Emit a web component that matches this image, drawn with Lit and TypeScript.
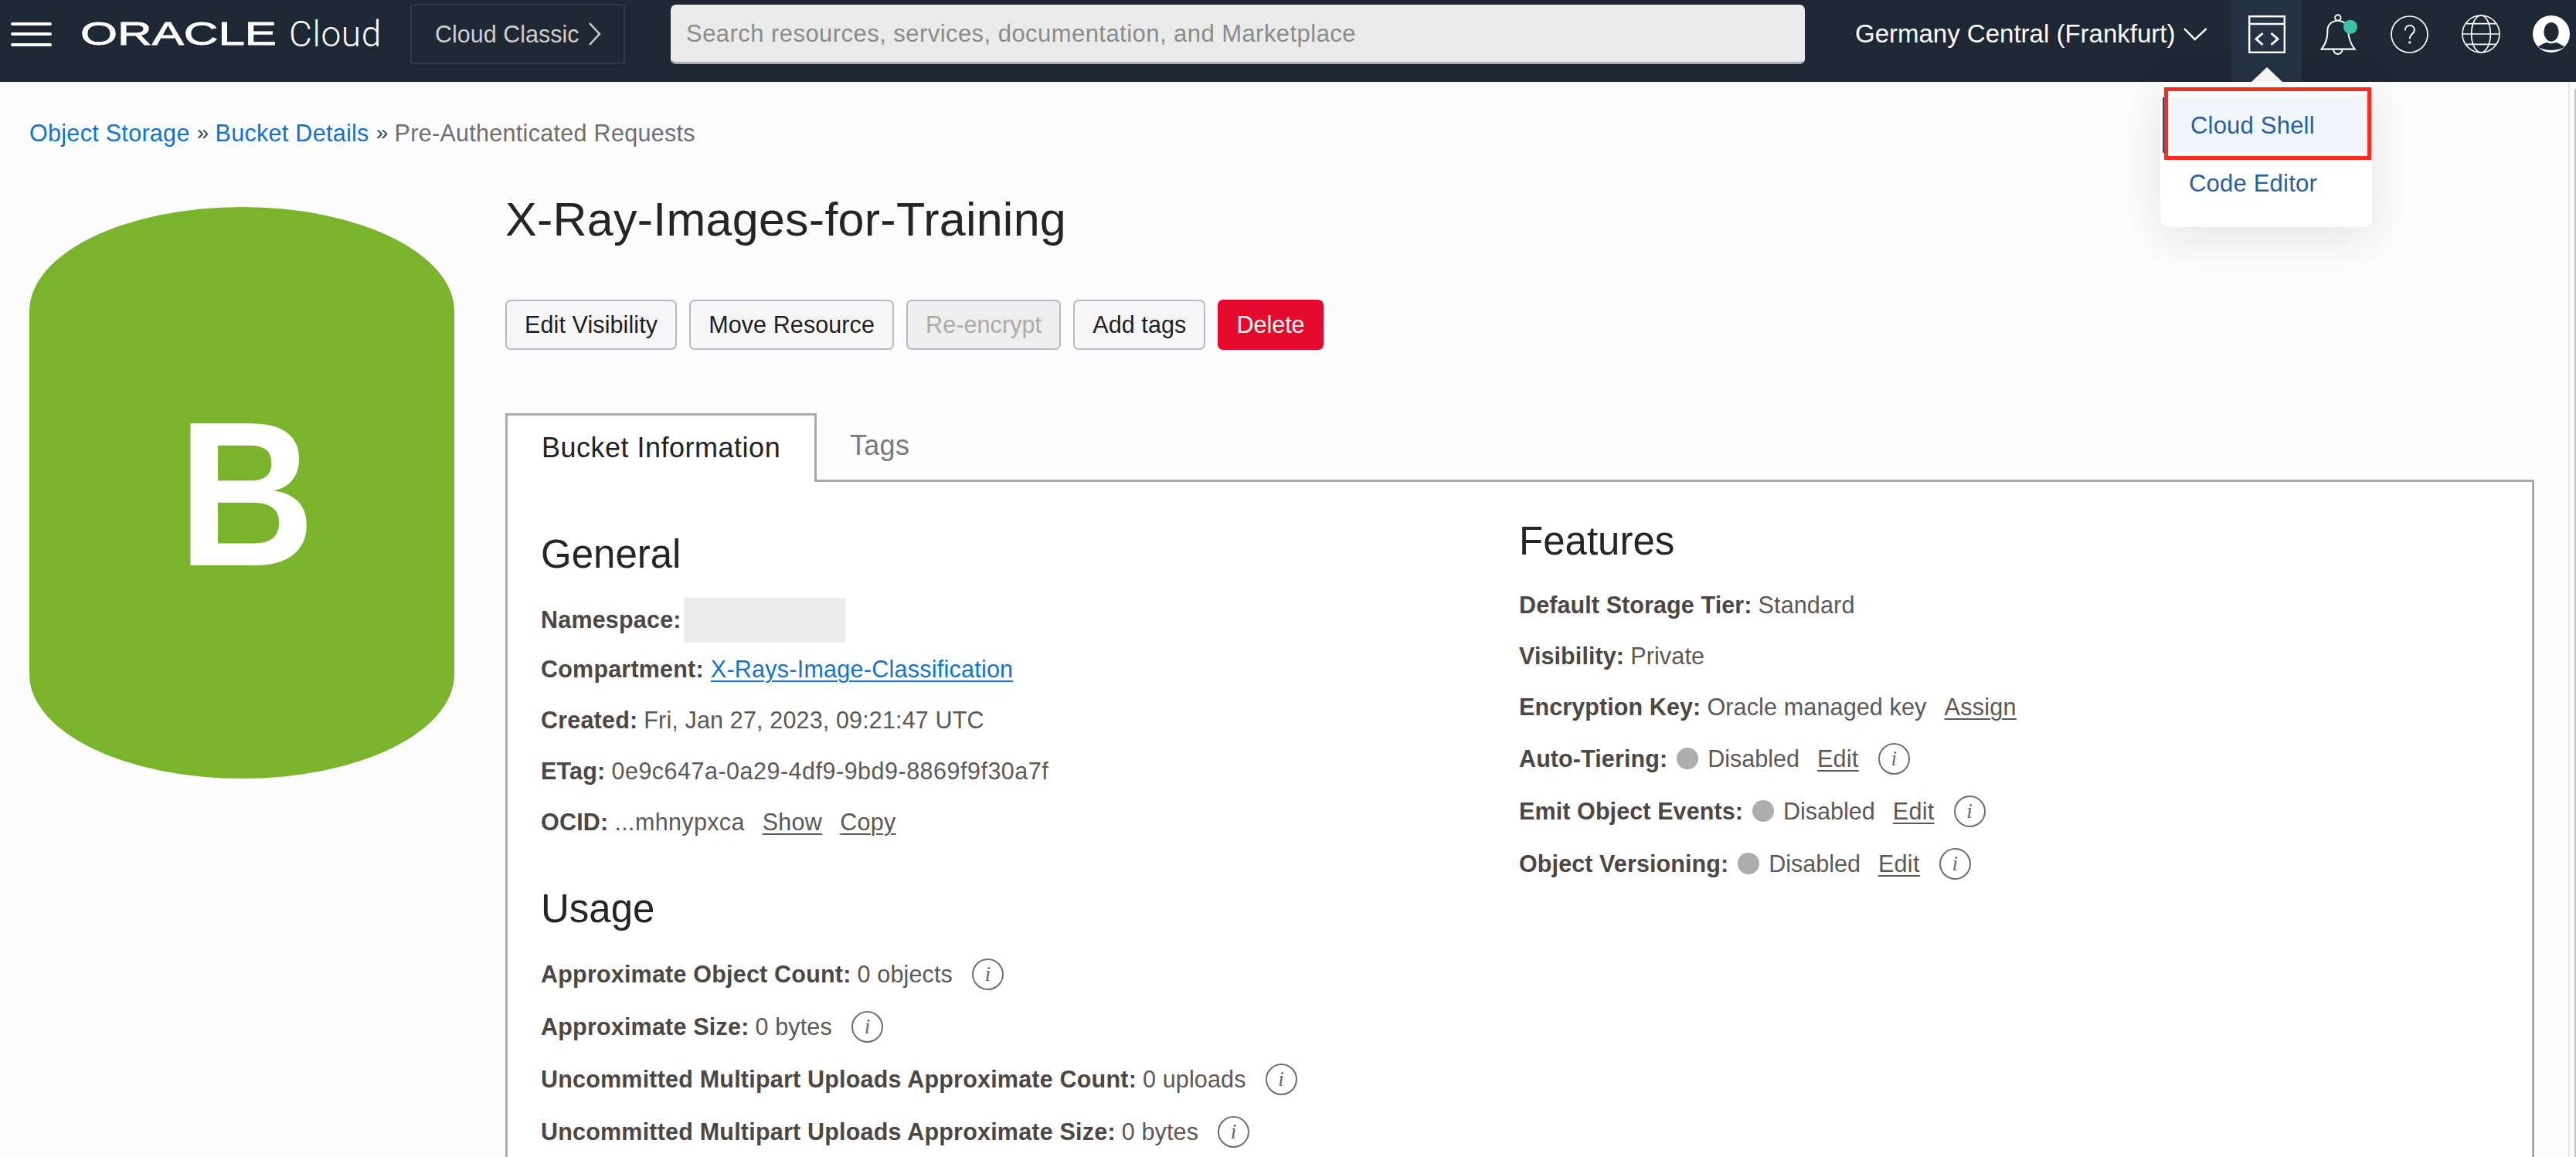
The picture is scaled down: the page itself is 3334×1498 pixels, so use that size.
import { LitElement, html, css, svg } from 'lit';
import { customElement } from 'lit/decorators.js';

const chevron = (points: string, w: number, h: number) => html`
  <svg width=${w} height=${h} viewBox="0 0 ${w} ${h}">
    <polyline points=${points} fill="none" stroke="currentColor" stroke-width="2.5"></polyline>
  </svg>
`;

const codeIcon = html`
  <svg width="48" height="49" viewBox="0 0 48 49" fill="none" stroke="#fff" stroke-width="2.4">
    <rect x="1.2" y="1.2" width="45.6" height="46.6"></rect>
    <line x1="1" y1="11" x2="47" y2="11"></line>
    <polyline points="18.5,23 10,30.5 18.5,38" stroke-width="3"></polyline>
    <polyline points="29.5,23 38,30.5 29.5,38" stroke-width="3"></polyline>
  </svg>
`;

const bellIcon = html`
  <svg width="49" height="53" viewBox="340 42 146 158" fill="none" stroke="#fff" stroke-width="6">
    <circle cx="408" cy="57" r="11"></circle>
    <path d="M391 180 a17 17 0 0 0 34 0"></path>
    <path d="M345 178 C368 148 368 122 368 105 C368 82 388 68 408 68 C428 68 448 82 448 105 C448 122 450 148 473 178 Z" fill="#1e2734"></path>
    <circle cx="456" cy="92" r="27" fill="#41c1a5" stroke="none"></circle>
  </svg>
`;

const helpIcon = html`
  <svg width="49" height="49" viewBox="612 46 146 146" fill="none" stroke="#fff" stroke-width="5">
    <circle cx="685" cy="119" r="70"></circle>
    <path d="M668 104 C668 92 676 85 686 85 C697 85 704 92 704 102 C704 113 696 116 691 122 C687 127 686 130 686 136" stroke-width="6"></path>
    <circle cx="686" cy="150" r="5" fill="#fff" stroke="none"></circle>
  </svg>
`;

const globeIcon = html`
  <svg width="50" height="50" viewBox="888 47 150 150" fill="none" stroke="#fff" stroke-width="5">
    <circle cx="963" cy="122" r="72"></circle>
    <ellipse cx="963" cy="122" rx="37" ry="72"></ellipse>
    <line x1="905" y1="82" x2="1021" y2="82"></line>
    <line x1="891" y1="122" x2="1035" y2="122"></line>
    <line x1="905" y1="162" x2="1021" y2="162"></line>
  </svg>
`;

const avatarIcon = html`
  <svg width="48" height="48" viewBox="1168 46 144 144">
    <circle cx="1240" cy="118" r="72" fill="#fff"></circle>
    <ellipse cx="1240" cy="110" rx="29" ry="37" fill="#1e2734"></ellipse>
    <path d="M1188 168 Q1204 156 1222 150 Q1240 160 1258 150 Q1276 156 1292 168 Q1240 194 1188 168 Z" fill="#1e2734"></path>
  </svg>
`;

const cylinder = svg`
  <path d="M0 135 A275 135 0 0 1 550 135 V605 A275 135 0 0 1 0 605 Z" fill="#7ab32c"></path>
  <text x="192" y="464" textLength="178" lengthAdjust="spacingAndGlyphs" font-family="Liberation Sans, Arial, sans-serif" font-weight="700" font-size="267" fill="#fff">B</text>
`;

@customElement('app-root')
export class AppRoot extends LitElement {
  static styles = css`
    :host {
      display: block;
      height: 1498px;
      overflow: hidden;
      background: #fcfcfc;
      font-family: "Liberation Sans", Arial, sans-serif;
      font-size: 30.5px;
      color: #5c5855;
    }
    * { box-sizing: border-box; }

    header {
      display: flex;
      align-items: center;
      height: 106px;
      padding-bottom: 18px;
      background: #1e2734;
      color: #fff;
    }
    .burger {
      display: flex;
      flex-direction: column;
      justify-content: space-between;
      width: 53px;
      height: 31px;
      margin-left: 14px;
    }
    .burger span { height: 4px; border-radius: 2px; background: #fff; }
    .logo { display: block; flex: none; margin-left: 37px; overflow: visible; }
    .logo text { font-family: "Liberation Sans", Arial, sans-serif; font-size: 43px; fill: #fff; stroke: #fff; stroke-width: .9px; }
    .cloud {
      width: 117px;
      margin-left: 16px;
      font-family: Roboto, sans-serif;
      font-weight: 300;
      font-size: 46px;
      letter-spacing: .6px;
    }
    .classic {
      display: flex;
      align-items: center;
      gap: 12px;
      width: 278px;
      height: 78px;
      margin-left: 40px;
      padding-left: 30px;
      border: 2px solid #303a46;
      border-radius: 4px;
      color: #cfcfcf;
    }
    .search {
      display: flex;
      align-items: center;
      width: 1468px;
      height: 77px;
      margin-left: 59px;
      padding-left: 18px;
      border: 2px solid #ebebeb;
      border-bottom: 3px solid #a9aeb8;
      border-radius: 7px;
      background: #ebebeb;
      color: #8b8b8b;
      font-size: 31px;
      letter-spacing: .45px;
    }
    .region {
      display: flex;
      align-items: center;
      gap: 11px;
      width: 457px;
      margin-left: 65px;
      font-size: 33px;
      white-space: nowrap;
    }
    .tool {
      position: relative;
      align-self: stretch;
      display: flex;
      align-items: center;
      justify-content: center;
      width: 91px;
      margin: 0 0 -18px 30px;
      padding-bottom: 18px;
      background: #253244;
    }
    .tri {
      position: absolute;
      left: 26px;
      top: 87px;
      width: 0;
      height: 0;
      border-left: 20px solid transparent;
      border-right: 20px solid transparent;
      border-bottom: 19px solid #fafafa;
    }
    .menu {
      position: absolute;
      z-index: 5;
      top: 106px;
      left: -92px;
      width: 274px;
      height: 188px;
      padding-top: 20px;
      border-radius: 0 0 10px 10px;
      background: #fff;
      box-shadow: 0 12px 60px rgba(0, 0, 0, .1);
      color: #2a5ea3;
      font-size: 31px;
      letter-spacing: .2px;
    }
    .item {
      display: flex;
      align-items: center;
      height: 72px;
      padding: 2px 0 0 37px;
      margin-bottom: 3px;
    }
    .item.on {
      margin-left: 3px;
      padding-left: 34px;
      border-left: 2px solid #1f4f8f;
      background: #f1f6fb;
    }
    .mark {
      position: absolute;
      left: 5px;
      top: 7px;
      width: 268px;
      height: 94px;
      border: 5px solid #ff2a1f;
    }
    .bell { margin-left: 24px; display: flex; }
    .help { margin-left: 42px; display: flex; }
    .globe { margin-left: 43px; display: flex; }
    .avatar { margin-left: 42px; display: flex; }

    .page { display: flex; height: 1392px; overflow: hidden; }
    .main { width: 3324px; flex: none; }
    .rail { flex: 1; padding: 9px 0 0 6px; border-left: 2px solid #e8e8e8; background: #fbfbfb; }
    .thumb { height: 100%; border-radius: 2px 0 0 0; background: #c2c2c2; }

    .crumbs {
      display: flex;
      align-items: center;
      height: 40px;
      margin-top: 46px;
      padding-left: 38px;
      color: #6f6f6f;
      letter-spacing: .3px;
    }
    .crumbs a { color: #1372cf; }
    .crumbs i { margin: 0 8px 0 9px; font-style: normal; color: #444; font-size: 28px; }

    .body { display: flex; margin-top: 57px; padding-left: 38px; gap: 66px; }
    .cyl { flex: none; margin-top: 19px; display: block; }
    .content { width: 2626px; flex: none; }
    h1 { margin: 0; height: 70px; font-size: 61px; line-height: 70px; font-weight: 400; color: #252525; letter-spacing: .25px; }

    .actions { display: flex; gap: 16px; margin-top: 69px; }
    .btn {
      display: flex;
      align-items: center;
      height: 65px;
      padding: 0 23px;
      border: 2px solid #b6bcc7;
      border-radius: 7px;
      background: #f6f6f6;
      color: #1f1f1f;
      letter-spacing: .1px;
    }
    .btn.off { background: #eeeeee; color: #aaa; }
    .btn.danger { padding: 0 22px; border-color: #e40b2f; background: #e40b2f; color: #fff; letter-spacing: 0; }

    .tabs { display: flex; height: 89px; margin-top: 82px; border-bottom: 3px solid #aaa; font-size: 36px; letter-spacing: .5px; }
    .tab { display: flex; align-items: center; padding-bottom: 2px; }
    .tab.on {
      width: 403px;
      height: 89px;
      padding-left: 44px;
      border: 3px solid #aaa;
      border-bottom: 0;
      background: #fff;
      color: #222;
    }
    .tab.plain { margin-left: 43px; color: #7a7a7a; letter-spacing: .3px; }

    .panel {
      display: grid;
      grid-template-columns: 1266px 1fr;
      height: 900px;
      padding: 47px 0 0 43px;
      border-left: 3px solid #aaa;
      border-right: 3px solid #aaa;
      background: #fff;
    }
    h2 { margin: 0; height: 60px; font-size: 51px; line-height: 60px; font-weight: 400; color: #252525; }
    .left { padding-top: 17px; }
    .rows { margin-top: 19px; }
    .rows.usage { margin-top: 20px; }
    h2.next { margin-top: 50px; }
    .row { display: flex; align-items: center; height: 66px; white-space: nowrap; }
    .row.tall { height: 68px; }
    .row.ns { padding-top: 4px; }
    .row b { font-weight: 700; color: #4c4743; letter-spacing: .2px; }
    .right .row b { letter-spacing: .1px; }
    .val { margin-left: 8px; letter-spacing: .15px; }
    .hex { letter-spacing: .5px; }
    .spaced { letter-spacing: .35px; }
    .row a { margin-left: 23px; color: #5c5855; letter-spacing: .3px; text-decoration: underline; text-decoration-thickness: 2px; text-underline-offset: 4px; }
    .row a.blue { margin-left: 9px; color: #1372cf; letter-spacing: .25px; }
    .redact { width: 209px; height: 58px; margin: 2px 0 0 3px; background: #ebebeb; }
    .dot { width: 28px; height: 28px; margin: 0 12px; border-radius: 50%; background: #adadad; }
    .info {
      display: flex;
      align-items: center;
      justify-content: center;
      width: 41px;
      height: 41px;
      margin-left: 25px;
      border: 2px solid #6e6e6e;
      border-radius: 50%;
      color: #666;
      font-family: "Liberation Serif", serif;
      font-style: italic;
      font-size: 27px;
    }
  `;

  private info() {
    return html`<span class="info">i</span>`;
  }

  private stateRow(label: string) {
    return html`
      <div class="row tall">
        <b>${label}:</b><span class="dot"></span><span>Disabled</span><a>Edit</a>${this.info()}
      </div>
    `;
  }

  private usageRow(label: string, value: string) {
    return html`
      <div class="row tall"><b>${label}:</b><span class="val">${value}</span>${this.info()}</div>
    `;
  }

  render() {
    return html`
      <header>
        <div class="burger"><span></span><span></span><span></span></div>
        <svg class="logo" width="254" height="34" viewBox="0 0 254 34">
          <text x="0" y="31" textLength="254" lengthAdjust="spacingAndGlyphs">ORACLE</text>
        </svg>
        <span class="cloud">Cloud</span>
        <div class="classic">
          <span>Cloud Classic</span>
          ${chevron('2,1 15,15 2,29', 17, 30)}
        </div>
        <div class="search">Search resources, services, documentation, and Marketplace</div>
        <div class="region">
          <span>Germany Central (Frankfurt)</span>
          ${chevron('1,1 15,15 30,1', 32, 17)}
        </div>
        <div class="tool">
          ${codeIcon}
          <span class="tri"></span>
          <div class="menu">
            <div class="item on">Cloud Shell</div>
            <div class="item">Code Editor</div>
            <div class="mark"></div>
          </div>
        </div>
        <div class="bell">${bellIcon}</div>
        <div class="help">${helpIcon}</div>
        <div class="globe">${globeIcon}</div>
        <div class="avatar">${avatarIcon}</div>
      </header>

      <div class="page">
        <div class="main">
          <nav class="crumbs">
            <a>Object Storage</a><i>»</i><a>Bucket Details</a><i>»</i><span>Pre-Authenticated Requests</span>
          </nav>
          <div class="body">
            <svg class="cyl" width="550" height="741" viewBox="0 0 550 741">${cylinder}</svg>
            <div class="content">
              <h1>X-Ray-Images-for-Training</h1>
              <div class="actions">
                <div class="btn">Edit Visibility</div>
                <div class="btn">Move Resource</div>
                <div class="btn off">Re-encrypt</div>
                <div class="btn">Add tags</div>
                <div class="btn danger">Delete</div>
              </div>
              <div class="tabs">
                <div class="tab on">Bucket Information</div>
                <div class="tab plain">Tags</div>
              </div>
              <div class="panel">
                <div class="left">
                  <h2>General</h2>
                  <div class="rows">
                    <div class="row ns"><b>Namespace:</b><span class="redact"></span></div>
                    <div class="row"><b>Compartment:</b><a class="blue">X-Rays-Image-Classification</a></div>
                    <div class="row"><b>Created:</b><span class="val">Fri, Jan 27, 2023, 09:21:47 UTC</span></div>
                    <div class="row"><b>ETag:</b><span class="val hex">0e9c647a-0a29-4df9-9bd9-8869f9f30a7f</span></div>
                    <div class="row"><b>OCID:</b><span class="val spaced">...mhnypxca</span><a>Show</a><a>Copy</a></div>
                  </div>
                  <h2 class="next">Usage</h2>
                  <div class="rows usage">
                    ${this.usageRow('Approximate Object Count', '0 objects')}
                    ${this.usageRow('Approximate Size', '0 bytes')}
                    ${this.usageRow('Uncommitted Multipart Uploads Approximate Count', '0 uploads')}
                    ${this.usageRow('Uncommitted Multipart Uploads Approximate Size', '0 bytes')}
                  </div>
                </div>
                <div class="right">
                  <h2>Features</h2>
                  <div class="rows">
                    <div class="row"><b>Default Storage Tier:</b><span class="val">Standard</span></div>
                    <div class="row"><b>Visibility:</b><span class="val">Private</span></div>
                    <div class="row"><b>Encryption Key:</b><span class="val">Oracle managed key</span><a>Assign</a></div>
                    ${this.stateRow('Auto-Tiering')}
                    ${this.stateRow('Emit Object Events')}
                    ${this.stateRow('Object Versioning')}
                  </div>
                </div>
              </div>
            </div>
          </div>
        </div>
        <div class="rail"><div class="thumb"></div></div>
      </div>
    `;
  }
}
